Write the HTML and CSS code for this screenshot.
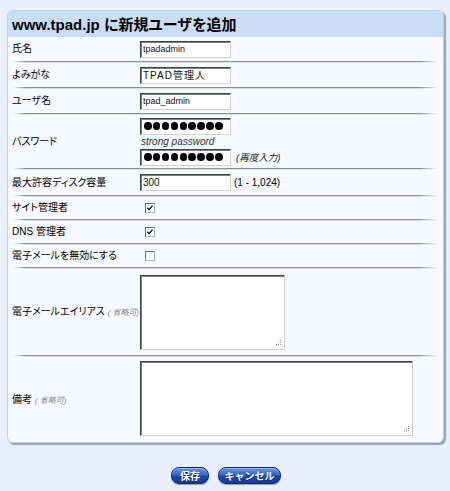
FILE: index.html
```html
<!DOCTYPE html>
<html lang="ja">
<head>
<meta charset="utf-8">
<title>新規ユーザを追加</title>
<link rel="stylesheet" href="styles.css">
</head>
<body>
<div class="panel">
  <h1 class="title"><span class="domain">www.tpad.jp</span> に新規ユーザを追加</h1>

  <div class="row row-input">
    <div class="label">氏名</div>
    <div class="field"><div class="text">tpadadmin</div></div>
  </div>
  <div class="sep"></div>

  <div class="row row-input">
    <div class="label">よみがな</div>
    <div class="field"><div class="text text-wide">TPAD管理人</div></div>
  </div>
  <div class="sep"></div>

  <div class="row row-input">
    <div class="label">ユーザ名</div>
    <div class="field"><div class="text">tpad_admin</div></div>
  </div>
  <div class="sep"></div>

  <div class="row row-pass">
    <div class="label">パスワード</div>
    <div class="field field-stack">
      <div class="text dots"><i></i><i></i><i></i><i></i><i></i><i></i><i></i><i></i><i></i></div>
      <div class="hint">strong password</div>
      <div class="inline">
        <div class="text dots"><i></i><i></i><i></i><i></i><i></i><i></i><i></i><i></i><i></i></div>
        <span class="note-jp">(再度入力)</span>
      </div>
    </div>
  </div>
  <div class="sep"></div>

  <div class="row row-disk">
    <div class="label">最大許容ディスク容量</div>
    <div class="field inline">
      <div class="text text-num">300</div>
      <span class="range">(1 - 1,024)</span>
    </div>
  </div>
  <div class="sep"></div>

  <div class="row row-check">
    <div class="label">サイト管理者</div>
    <div class="field"><span class="check checked"><svg viewBox="0 0 9 9" width="9" height="9"><path d="M1.5 4.2 L3.4 6.3 L7.4 1.8" fill="none" stroke="#000" stroke-width="1.4"/></svg></span></div>
  </div>
  <div class="sep"></div>

  <div class="row row-check">
    <div class="label">DNS 管理者</div>
    <div class="field"><span class="check checked"><svg viewBox="0 0 9 9" width="9" height="9"><path d="M1.5 4.2 L3.4 6.3 L7.4 1.8" fill="none" stroke="#000" stroke-width="1.4"/></svg></span></div>
  </div>
  <div class="sep"></div>

  <div class="row row-check">
    <div class="label">電子メールを無効にする</div>
    <div class="field"><span class="check"></span></div>
  </div>
  <div class="sep"></div>

  <div class="row row-area1">
    <div class="label">電子メールエイリアス <span class="opt">( 省略可)</span></div>
    <div class="field">
      <div class="area area-small">
        <svg class="grip" viewBox="0 0 7 7" width="7" height="7"><rect x="5" y="0" width="1" height="1" fill="#999"/><rect x="3" y="2" width="1" height="1" fill="#999"/><rect x="5" y="2" width="1" height="1" fill="#999"/><rect x="1" y="4" width="1" height="1" fill="#999"/><rect x="3" y="4" width="1" height="1" fill="#999"/><rect x="5" y="4" width="1" height="1" fill="#999"/></svg>
      </div>
    </div>
  </div>
  <div class="sep"></div>

  <div class="row row-area2">
    <div class="label">備考 <span class="opt">( 省略可)</span></div>
    <div class="field">
      <div class="area area-large">
        <svg class="grip" viewBox="0 0 7 7" width="7" height="7"><rect x="5" y="0" width="1" height="1" fill="#999"/><rect x="3" y="2" width="1" height="1" fill="#999"/><rect x="5" y="2" width="1" height="1" fill="#999"/><rect x="1" y="4" width="1" height="1" fill="#999"/><rect x="3" y="4" width="1" height="1" fill="#999"/><rect x="5" y="4" width="1" height="1" fill="#999"/></svg>
      </div>
    </div>
  </div>
</div>

<div class="buttons">
  <button class="btn btn-save">保存</button>
  <button class="btn btn-cancel">キャンセル</button>
</div>
</body>
</html>
```

FILE: styles.css
```css
html, body {
  margin: 0;
  padding: 0;
  background: #e8effb;
}
body {
  width: 450px;
  height: 491px;
  padding-top: 10px;
  box-sizing: border-box;
  font-family: "Liberation Sans", "Noto Sans CJK JP", sans-serif;
  font-feature-settings: "palt";
  color: #000;
}
.panel {
  margin-left: 7px;
  width: 437px;
  height: 433px;
  box-sizing: border-box;
  background: #f6f9ff;
  border: 1px solid #c3d2e8;
  border-radius: 6px;
  box-shadow: 1px 1px 0 #9aa3b0, 2px 2px 1px rgba(60, 70, 90, 0.45);
  overflow: hidden;
}
.title {
  margin: 0;
  height: 26px;
  box-sizing: border-box;
  padding: 5px 0 0 4px;
  background: #c9ddf7;
  font-size: 15px;
  line-height: 18px;
  font-weight: bold;
  color: #000;
  white-space: nowrap;
}
.title .domain {
  font-family: "Liberation Sans", sans-serif;
}
.row {
  display: grid;
  grid-template-columns: 128px 1fr;
  align-items: center;
  padding-left: 4px;
  font-size: 10px;
}
.label {
  font-family: "Liberation Sans", "Noto Sans CJK JP", sans-serif;
  font-size: 10px;
  line-height: 12px;
  white-space: nowrap;
}
.opt {
  color: #888;
  font-style: italic;
  font-size: 8px;
}
.row-input { height: 24px; }
.row-pass { height: 53px; }
.row-disk { height: 25px; }
.row-check { height: 22px; }
.row-area1 { height: 86px; }
.row-area2 { height: 88px; align-items: start; }
.row-area2 .label { padding-top: 37px; }
.row-area2 .field { padding-top: 4px; }

.sep {
  height: 2px;
  margin: 0 6px 0 5px;
  background:
    linear-gradient(to right, rgba(246,249,255,1) 0%, rgba(246,249,255,0) 3%, rgba(246,249,255,0) 96%, rgba(246,249,255,1) 100%),
    linear-gradient(to bottom, #8e8e8e 0, #8e8e8e 1px, #dedede 1px, #dedede 2px);
}

.field {
  display: flex;
  align-items: center;
}
.field-stack {
  flex-direction: column;
  align-items: flex-start;
}
.inline {
  display: flex;
  align-items: center;
}
.text {
  width: 91px;
  height: 17px;
  box-sizing: border-box;
  background: #fff;
  border: 1px solid;
  border-color: #404040 #d4d0c8 #d4d0c8 #404040;
  box-shadow: inset 1px 1px 0 #808080;
  font-family: "Liberation Sans", "Noto Sans CJK JP", sans-serif;
  font-size: 9px;
  line-height: 15px;
  padding-left: 2px;
  color: #111;
  white-space: nowrap;
  overflow: hidden;
}
.text-wide {
  font-size: 10px;
  letter-spacing: 1px;
}
.text-num {
  font-size: 10px;
}
.dots {
  display: flex;
  align-items: center;
  gap: 1.3px;
  padding-left: 3px;
}
.dots i {
  display: block;
  width: 7.6px;
  height: 7.6px;
  border-radius: 50%;
  background: #000;
}
.hint {
  font-family: "Liberation Sans", sans-serif;
  font-style: italic;
  font-size: 10px;
  line-height: 14px;
  color: #333;
  padding-left: 1px;
}
.note-jp {
  margin-left: 5px;
  font-style: italic;
  font-size: 9.5px;
  color: #222;
}
.range {
  margin-left: 3px;
  font-family: "Liberation Sans", sans-serif;
  font-size: 10px;
}
.check {
  display: inline-flex;
  align-items: center;
  justify-content: center;
  width: 10px;
  height: 10px;
  box-sizing: border-box;
  margin-left: 5px;
  background: #fff;
  border: 1px solid;
  border-color: #6e6e6e #b8b8b8 #b8b8b8 #6e6e6e;
}
.check svg { display: block; width: 8px; height: 8px; }

.area {
  position: relative;
  height: 75px;
  box-sizing: border-box;
  background: #fff;
  border: 1px solid;
  border-color: #404040 #d4d0c8 #d4d0c8 #404040;
  box-shadow: inset 1px 1px 0 #808080;
}
.area-small { width: 145px; }
.area-large { width: 273px; }
.grip {
  position: absolute;
  right: 2px;
  bottom: 2px;
}

.buttons {
  display: flex;
  justify-content: center;
  gap: 9px;
  padding-top: 24px;
  padding-left: 2px;
}
.btn {
  height: 17px;
  box-sizing: border-box;
  padding: 0;
  border: 1px solid #0b2a66;
  border-radius: 8px;
  background: linear-gradient(to bottom, #6f95e0 0%, #3464c6 45%, #1a48a8 55%, #143c92 100%);
  box-shadow: 0 1px 1px rgba(0, 0, 0, 0.35), inset 0 1px 0 rgba(255,255,255,0.35);
  color: #fff;
  font-family: "Noto Sans CJK JP", sans-serif;
  font-weight: bold;
  font-size: 10px;
  line-height: 14px;
  text-shadow: 0 1px 0 #0a2050;
  cursor: pointer;
}
.btn-save { width: 38px; }
.btn-cancel { width: 63px; }
```
